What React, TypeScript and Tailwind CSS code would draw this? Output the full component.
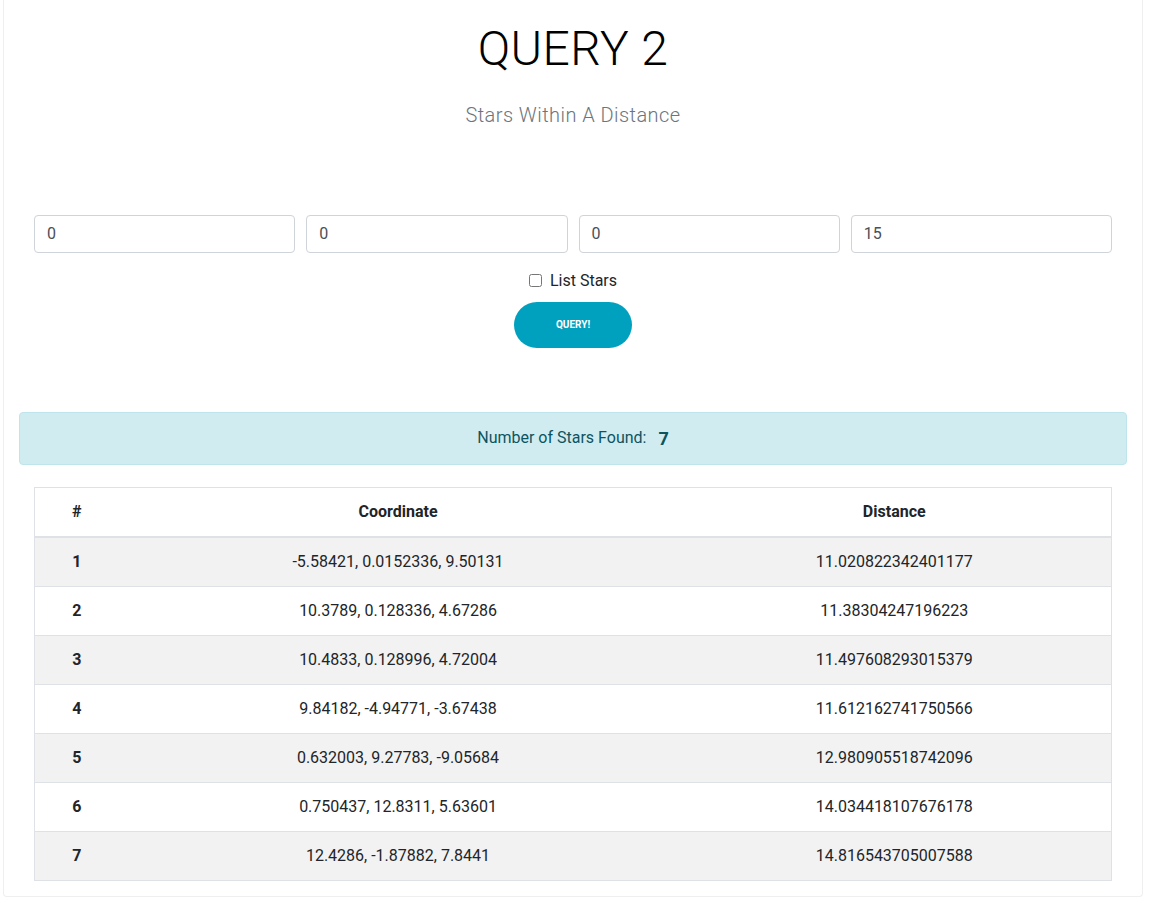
import React from "react";

const stars = [
  { id: 1, coord: "-5.58421, 0.0152336, 9.50131", dist: "11.020822342401177" },
  { id: 2, coord: "10.3789, 0.128336, 4.67286", dist: "11.38304247196223" },
  { id: 3, coord: "10.4833, 0.128996, 4.72004", dist: "11.497608293015379" },
  { id: 4, coord: "9.84182, -4.94771, -3.67438", dist: "11.612162741750566" },
  { id: 5, coord: "0.632003, 9.27783, -9.05684", dist: "12.980905518742096" },
  { id: 6, coord: "0.750437, 12.8311, 5.63601", dist: "14.034418107676178" },
  { id: 7, coord: "12.4286, -1.87882, 7.8441", dist: "14.816543705007588" },
];

export default function App() {
  return (
    <div className="min-h-[907px] bg-white font-['Roboto','Liberation_Sans',sans-serif] text-[#212529]">
      <div className="ml-[3px] w-[1140px] rounded-b border border-t-0 border-[#efefef] px-[15px] pb-[15px]">
        {/* heading */}
        <h1 className="pt-[20px] text-center text-[48px] font-light leading-[1.2] tracking-[0.4px] text-black">
          QUERY 2
        </h1>
        <p className="mt-[22px] text-center text-[20px] font-light leading-[30px] tracking-[0.45px] text-[#6c757d]">
          Stars Within A Distance
        </p>

        {/* form */}
        <div className="mt-[85px] px-[15px]">
          <div className="flex gap-[11px]">
            {["0", "0", "0", "15"].map((v, i) => (
              <input
                key={i}
                defaultValue={v}
                className="h-[38px] min-w-0 flex-1 rounded-[4px] border border-[#ced4da] px-3 text-[16px] text-[#495057] outline-none"
              />
            ))}
          </div>
          <label className="mt-[16px] flex items-center justify-center gap-[8px] text-[16px] leading-6 text-[#212529]">
            <input type="checkbox" className="h-[13px] w-[13px]" />
            List Stars
          </label>
          <div className="mt-[9px] flex justify-center">
            <button className="h-[46px] w-[118px] rounded-full bg-[#00a0bf] text-[10px] font-bold uppercase text-white">
              QUERY!
            </button>
          </div>
        </div>

        {/* result alert */}
        <div className="mt-[64px] flex h-[53px] items-center justify-center rounded-[4px] border border-[#bee5eb] bg-[#d1ecf1] text-[#0c5460]">
          <span className="text-[16px]">Number of Stars Found:</span>
          <span className="ml-[12px] text-[18px] font-bold">7</span>
        </div>

        {/* table */}
        <div className="mt-[22px] px-[15px]">
          <table className="w-full border-collapse border border-[#dee2e6] text-center text-[16px]">
            <thead>
              <tr>
                <th className="w-[84px] border-y border-b-2 border-[#dee2e6] py-3 font-bold leading-6">#</th>
                <th className="w-[559px] border-y border-b-2 border-[#dee2e6] py-3 font-bold leading-6">Coordinate</th>
                <th className="border-y border-b-2 border-[#dee2e6] py-3 font-bold leading-6">Distance</th>
              </tr>
            </thead>
            <tbody>
              {stars.map((s) => (
                <tr key={s.id} className={s.id % 2 === 1 ? "bg-[#f2f2f2]" : "bg-white"}>
                  <td className="border-t border-[#dee2e6] py-3 font-bold leading-6">{s.id}</td>
                  <td className="border-t border-[#dee2e6] py-3 leading-6">{s.coord}</td>
                  <td className="border-t border-[#dee2e6] py-3 leading-6">{s.dist}</td>
                </tr>
              ))}
            </tbody>
          </table>
        </div>
      </div>
    </div>
  );
}
